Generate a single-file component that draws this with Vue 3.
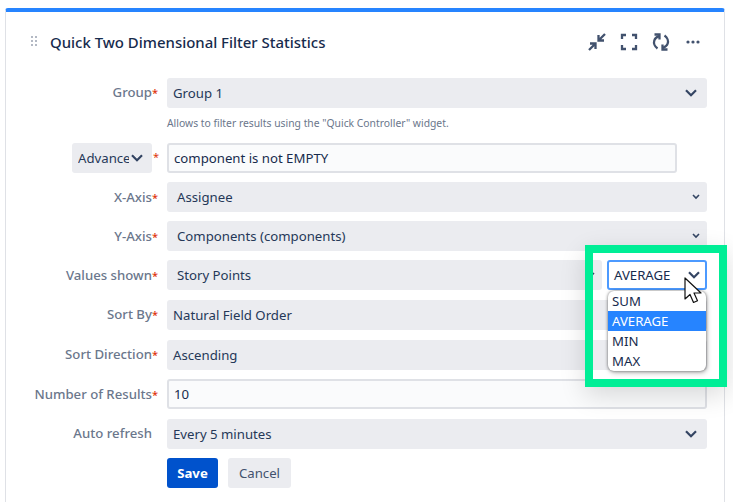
<script setup>
const topRows = [
  { label: 'X-Axis', value: 'Assignee', small: true },
  { label: 'Y-Axis', value: 'Components (components)', small: true },
]
const options = ['SUM', 'AVERAGE', 'MIN', 'MAX']
</script>

<template>
  <div class="page">
    <section class="card">
      <header class="head">
        <svg class="grip" width="6" height="12" viewBox="0 0 6 12"><g fill="#b3b9c4"><rect width="2" height="2"/><rect x="4" width="2" height="2"/><rect y="4" width="2" height="2"/><rect x="4" y="4" width="2" height="2"/><rect y="8" width="2" height="2"/><rect x="4" y="8" width="2" height="2"/></g></svg>
        <h1>Quick Two Dimensional Filter Statistics</h1>
        <div class="tools">
          <svg width="18" height="18" viewBox="0 0 18 18" fill="none" stroke="#42526e" stroke-width="2.300"><path d="M17 1l-6 6M10.500 2v5.500H16"/><path d="M1 17l6-6M2 10.500h5.500V16"/></svg>
          <svg width="18" height="18" viewBox="0 0 18 18" fill="none" stroke="#42526e" stroke-width="2.300"><path d="M6 2H2v4M12 2h4v4M6 16H2v-4M12 16h4v-4"/></svg>
          <svg width="18" height="18" viewBox="0 0 18 18" fill="none" stroke="#42526e" stroke-width="2.300"><path d="M5.500 15.500C2.500 13.500 1.500 10 2.300 7.500 3 5.300 4.500 4 7 3.200"/><path d="M2.500 1.500h5V6.500"/><path d="M12.500 2.500c3 2 4 5.500 3.200 8-.7 2.200-2.200 3.500-4.700 4.300"/><path d="M15.500 16.500h-5v-5"/></svg>
          <svg width="18" height="4" viewBox="0 0 18 4" fill="#42526e"><circle cx="4" cy="2" r="1.600"/><circle cx="9" cy="2" r="1.600"/><circle cx="14" cy="2" r="1.600"/></svg>
        </div>
      </header>

      <form class="form" @submit.prevent>
        <div class="row">
          <label class="label">Group<i>*</i></label>
          <div class="field select"><span class="tight">Group 1</span><svg class="chev" width="12" height="8" viewBox="0 0 12 8" fill="none" stroke="#344563" stroke-width="2.200"><path d="M1 1.300l5 5 5-5"/></svg></div>
        </div>
        <p class="help">Allows to filter results using the "Quick Controller" widget.</p>

        <div class="row adv">
          <div class="advwrap">
            <div class="advbtn"><span class="advtext">Advanced</span><svg class="chev" width="12" height="8" viewBox="0 0 12 8" fill="none" stroke="#344563" stroke-width="2.200"><path d="M1 1.300l5 5 5-5"/></svg></div>
            <i class="star">*</i>
          </div>
          <div class="input query">component is not EMPTY</div>
        </div>

        <div v-for="r in topRows" :key="r.label" class="row">
          <label class="label">{{ r.label }}<i>*</i></label>
          <div class="field select wide-pad"><span>{{ r.value }}</span><svg width="8" height="6" viewBox="0 0 8 6" fill="none" stroke="#344563" stroke-width="1.600"><path d="M1 1l3 3 3-3"/></svg></div>
        </div>

        <div class="row values">
          <label class="label">Values shown<i>*</i></label>
          <div class="field select wide-pad story"><span>Story Points</span><svg width="8" height="6" viewBox="0 0 8 6" fill="none" stroke="#344563" stroke-width="1.600"><path d="M1 1l3 3 3-3"/></svg></div>
          <div class="agg">
            <div class="aggbox"><span>AVERAGE</span><svg width="12" height="8" viewBox="0 0 12 8" fill="none" stroke="#344563" stroke-width="2.200"><path d="M1 1.300l5 5 5-5"/></svg></div>
            <ul class="menu">
              <li v-for="o in options" :key="o" :class="{ on: o === 'AVERAGE' }">{{ o }}</li>
            </ul>
            <svg class="cursor" width="24" height="28" viewBox="0 0 24 28"><path d="M2 1v21l5-4.500 3.500 8 4-1.800-3.500-7.700h7z" fill="#fff" stroke="#111" stroke-width="1.200" stroke-linejoin="round"/></svg>
          </div>
        </div>

        <div class="row gap10">
          <label class="label">Sort By<i>*</i></label>
          <div class="field select"><span class="tight">Natural Field Order</span></div>
        </div>
        <div class="row gap10">
          <label class="label">Sort Direction<i>*</i></label>
          <div class="field select"><span class="tight">Ascending</span></div>
        </div>
        <div class="row">
          <label class="label">Number of Results<i>*</i></label>
          <div class="input count">10</div>
        </div>
        <div class="row gap10">
          <label class="label">Auto refresh<i class="blank">*</i></label>
          <div class="field select"><span class="tight">Every 5 minutes</span><svg class="chev" width="12" height="8" viewBox="0 0 12 8" fill="none" stroke="#344563" stroke-width="2.200"><path d="M1 1.300l5 5 5-5"/></svg></div>
        </div>
        <div class="actions">
          <button type="button" class="btn save">Save</button>
          <button type="button" class="btn cancel">Cancel</button>
        </div>
      </form>
    </section>
    <div class="frame"></div>
  </div>
</template>

<style>
html, body { margin: 0; background: #fff; }
</style>

<style scoped>
.page {
  position: relative;
  width: 733px;
  height: 502px;
  overflow: hidden;
  background: #fff;
  font-family: "Noto Sans", "Open Sans", sans-serif;
  font-size: 13.200px;
  color: #172b4d;
  padding: 8px 0 0 5px;
  box-sizing: border-box;
}
.card {
  width: 720px;
  height: 520px;
  box-sizing: border-box;
  border: 1px solid #dfe1e6;
  border-top: 4px solid #2684ff;
  border-radius: 3px 3px 0 0;
  padding: 0 17px 0 0;
}
.head {
  display: flex;
  align-items: center;
  height: 36px;
  margin-top: 12px;
  padding-left: 25px;
}
.grip { margin-right: 13px; }
h1 {
  margin: 0;
  font-size: 14.950px;
  font-weight: 500;
  color: #172b4d;
  flex: 1;
}
.tools {
  display: flex;
  align-items: center;
  gap: 14px;
  padding-right: 5px;
}
.form { margin-top: 18px; display: flex; flex-direction: column; }
.row { display: flex; align-items: center; height: 30px; margin-top: 9px; }
.row:first-child { margin-top: 0; }
.row.adv { margin-top: 13px; }
.row.gap10 { margin-top: 10px; }
.row.values { margin-top: 9px; position: relative; }
.label {
  width: 152px;
  flex: none;
  box-sizing: border-box;
  text-align: right;
  font-weight: 500;
  color: #6b778c;
  font-size: 13.200px;
  margin-right: 9px;
  white-space: nowrap;
}
.row:first-child .label, .row.gap10 .label { margin-top: -2px; }
.label i, .star { color: #de350b; font-style: normal; font-size: 11px; }
.label i.blank { visibility: hidden; }
.field {
  flex: 1;
  height: 30px;
  background: #ebecf0;
  border-radius: 3px;
  box-sizing: border-box;
  display: flex;
  align-items: center;
  justify-content: space-between;
  padding: 0 7px 0 6px;
}
.select span { color: #253858; }
.wide-pad { padding-left: 10px; padding-right: 7px; }
.chev { flex: none; margin-right: 3px; }
.help {
  margin: 8px 0 0 161px;
  font-size: 10.350px;
  line-height: 14px;
  color: #6b778c;
}
.advwrap {
  width: 161px;
  flex: none;
  box-sizing: border-box;
  padding-left: 66px;
  display: flex;
  align-items: center;
}
.advbtn {
  width: 80px;
  height: 30px;
  box-sizing: border-box;
  background: #ebecf0;
  border-radius: 3px;
  display: flex;
  align-items: center;
  padding-left: 6px;
  position: relative;
  overflow: hidden;
}
.advtext { width: 51px; overflow: hidden; white-space: nowrap; color: #253858; flex: none; }
.advbtn .chev { margin-left: 2px; }
.star { margin-left: 1px; margin-top: -3px; }
.input {
  height: 30px;
  box-sizing: border-box;
  border: 2px solid #dfe1e6;
  border-radius: 3px;
  background: #fafbfc;
  display: flex;
  align-items: center;
  padding-left: 5px;
  color: #172b4d;
}
.query { width: 510px; }
.count { flex: 1; }
.story { flex: none; width: 435px; }
.agg {
  position: absolute;
  left: 601px;
  top: 0;
  width: 100px;
}
.aggbox {
  height: 30px;
  box-sizing: border-box;
  background: #fff;
  border: 2px solid #4c9aff;
  border-radius: 3px;
  display: flex;
  align-items: center;
  justify-content: space-between;
  padding: 0 5px 0 5px;
  color: #172b4d;
}
.menu {
  list-style: none;
  margin: 1px 1px 0 1px;
  padding: 0;
  background: #fff;
  border-radius: 6px;
  box-shadow: 0 0 3px rgba(0,0,0,.5), 1px 2px 5px rgba(0,0,0,.25);
  overflow: hidden;
  position: relative;
}
.menu li {
  height: 20px;
  line-height: 21px;
  padding-left: 4px;
  color: #172b4d;
}
.menu li.on { background: #2684ff; color: #fff; }
.cursor { position: absolute; left: 76px; top: 17px; z-index: 3; }
.actions { display: flex; gap: 10px; margin: 9px 0 0 161px; }
.btn {
  height: 30px;
  border: 0;
  border-radius: 3px;
  font-family: inherit;
  font-size: 13.200px;
  padding: 0;
}
.save { width: 51px; background: #0052cc; color: #fff; font-weight: 700; }
.cancel { width: 63px; background: #ebecf0; color: #42526e; }
.frame {
  position: absolute;
  left: 585px;
  top: 245px;
  width: 142px;
  height: 142px;
  box-sizing: border-box;
  border: 8px solid #00ee96;
  box-shadow: 0 8px 24px rgba(0,0,0,.14);
  pointer-events: none;
}
</style>
